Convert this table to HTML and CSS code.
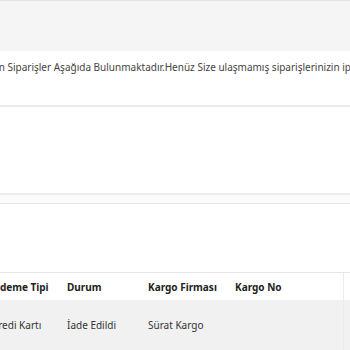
FILE: index.html
```html
<!DOCTYPE html>
<html lang="tr">
<head>
<meta charset="utf-8">
<link rel="stylesheet" href="styles.css">
</head>
<body>
<div class="page">
  <div class="topbar"></div>
  <div class="info">
    <p class="info-text">Tamamlanan Siparişler Aşağıda Bulunmaktadır.Henüz Size ulaşmamış siparişlerinizin iptal işlemleri için bizimle iletişime geçebilirsiniz.</p>
  </div>
  <div class="gap1"></div>
  <div class="divider"></div>
  <div class="gap2"></div>
  <div class="table">
    <div class="row head">
      <div class="cell c1">Ödeme Tipi</div>
      <div class="cell c2">Durum</div>
      <div class="cell c3">Kargo Firması</div>
      <div class="cell c4">Kargo No</div>
      <div class="cell c5"></div>
    </div>
    <div class="row body">
      <div class="cell c1">Kredi Kartı</div>
      <div class="cell c2">İade Edildi</div>
      <div class="cell c3">Sürat Kargo</div>
      <div class="cell c4"></div>
      <div class="cell c5"></div>
    </div>
  </div>
</div>
</body>
</html>
```
FILE: styles.css
```css
html, body {
  margin: 0;
  padding: 0;
  background: #ffffff;
  overflow: hidden;
}
body {
  font-family: "Noto Sans", "Open Sans", sans-serif;
  font-size: 10px;
  color: #333;
}
.page {
  width: 350px;
  overflow: hidden;
}
.topbar {
  height: 50px;
  background: #f5f5f5;
  border-top: 1px solid #e3e3e3;
}
.info {
  height: 54px;
  border-bottom: 2px solid #ebebeb;
  display: flex;
  align-items: center;
}
.info-text {
  margin: 0 0 0 -56px;
  white-space: nowrap;
  color: #444;
  padding-bottom: 22px;
}
.gap1 {
  height: 86px;
}
.divider {
  height: 8px;
  border-top: 2px solid #ececec;
  border-bottom: 1px solid #e4e4e4;
  background: #fbfbfb;
}
.gap2 {
  height: 68px;
}
.table {
  border-top: 1px solid #e8e8e8;
  margin-left: -8px;
}
.row {
  display: grid;
  grid-template-columns: 75px 81px 87px 108px 40px;
  align-items: center;
}
.head {
  height: 27px;
  font-weight: bold;
  color: #222;
}
.body {
  height: 50px;
  background: #f1f1f1;
}
.cell {
  white-space: nowrap;
}
.c5 {
  height: 100%;
  border-left: 1px solid #ececec;
}
```
